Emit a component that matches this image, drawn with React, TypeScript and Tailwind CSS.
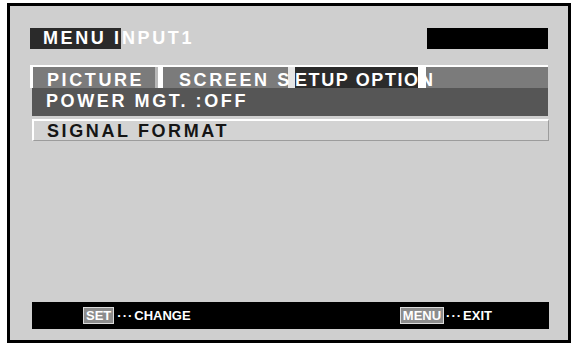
export default function App() {
  const osd = "[font-family:'Liberation_Sans',Arial,sans-serif] font-bold text-[18px] tracking-[2.6px] whitespace-nowrap";

  return (
    <div className="w-[573px] h-[348px] bg-white overflow-hidden pt-[3px] pl-[7px]">
      <div className="w-[564px] h-[340px] border-[3px] border-black bg-[#cfcfcf] flex flex-col pl-[20px] pr-[19px] pt-[22px] pb-[11px]">
        {/* title line */}
        <div className="flex justify-between h-[21px]">
          <div className={`flex ${osd} leading-[21px] text-white`}>
            <div className="w-[91px] h-[21px] bg-[#2a2a2a] pl-[13px]">MENU I</div>
            <span className="ml-[1px]">NPUT1</span>
          </div>
          <div className="w-[121px] h-[21px] bg-black mr-[1px]" />
        </div>

        {/* tabs */}
        <div className={`mt-[16px] mr-[1px] flex h-[23px] border-t-2 border-white ${osd} leading-[20px] text-white`}>
          <div className="w-[128px] h-[21px] bg-[#7b7b7b] border-l-[3px] border-l-white border-r-[3px] border-r-[#b8b8b8] pl-[14px] pt-[3px]">
            PICTURE
          </div>
          <div className="w-[137px] h-[21px] bg-[#7b7b7b] border-l-[5px] border-l-white border-r-[7px] border-r-[#e6e6e6] pl-[16px] pt-[3px]">
            SCREEN S
          </div>
          <div className="w-[123px] h-[21px] bg-[#2b2b2b] pt-[3px] tracking-[1.6px]">ETUP OPTIO</div>
          <div className="flex-1 h-[21px] bg-[#7b7b7b] border-l-[8px] border-l-white pt-[3px]">
            <span className="ml-[-6px]">N</span>
          </div>
        </div>

        {/* items */}
        <div className={`ml-[2px] mr-[1px] h-[28px] bg-[#565656] pl-[14px] pt-[3px] ${osd} leading-[20px] text-white`}>
          POWER MGT. :OFF
        </div>
        <div className={`mt-[3px] ml-[2px] h-[22px] bg-[#d3d3d3] border-t-2 border-l-2 border-white border-b border-r border-b-[#9c9c9c] border-r-[#9c9c9c] pl-[13px] pt-[1px] ${osd} leading-[19px] text-[#151515]`}>
          SIGNAL FORMAT
        </div>

        {/* guide bar */}
        <div className="mt-auto ml-[2px] h-[27px] bg-black flex items-center pl-[51px] pr-[57px] text-white text-[13px] font-bold [font-family:'Liberation_Sans',Arial,sans-serif]">
          <div className="flex items-center">
            <span className="h-[17px] px-[2px] leading-[15px] border border-[#dcdcdc] bg-[#8c8c8c] text-white">SET</span>
            <span className="ml-[3px] tracking-[1px]">···</span>
            <span className="ml-[1px]">CHANGE</span>
          </div>
          <div className="ml-auto flex items-center">
            <span className="h-[17px] px-[2px] leading-[15px] border border-[#dcdcdc] bg-[#8c8c8c] text-white">MENU</span>
            <span className="ml-[2px] tracking-[1px]">···</span>
            <span className="ml-[1px]">EXIT</span>
          </div>
        </div>
      </div>
    </div>
  );
}
